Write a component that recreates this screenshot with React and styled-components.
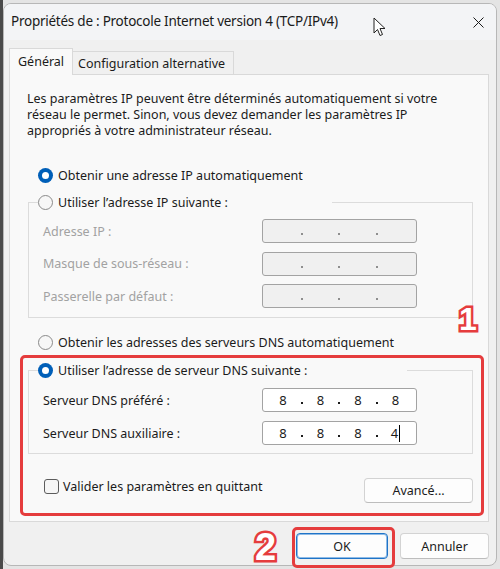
import React from "react";
import styled, { createGlobalStyle, css } from "styled-components";

const Global = createGlobalStyle`
  html, body { margin: 0; padding: 0; background: #d9d9d9; }
  body { font-family: "Noto Sans", "Open Sans", sans-serif; color: #1b1b1b; }
  * { box-sizing: border-box; }
`;

const Stage = styled.div`
  position: relative;
  width: 500px;
  height: 569px;
  overflow: hidden;
  padding: 3px 0 0 3px;
  background: linear-gradient(90deg, #4a4a4a 0 3px, #e4e4e4 3px);
`;

const Window = styled.div`
  width: 494px;
  height: 563px;
  background: #f0f0f0;
  border: 1px solid #b7b7b7;
  border-radius: 8px;
  overflow: hidden;
  display: flex;
  flex-direction: column;
`;

const TitleBar = styled.div`
  height: 36px;
  flex: none;
  display: flex;
  align-items: center;
  padding: 0 0 2px 7px;
  background: #f3f4f6;
`;

const Title = styled.div`
  font-size: 13.5px;
  letter-spacing: -0.25px;
  color: #1a1a1a;
  white-space: nowrap;
`;

const CloseButton = styled.div`
  margin-left: auto;
  width: 35px;
  height: 36px;
  display: grid;
  place-items: center;
  padding-top: 2px;
`;

const Body = styled.div`
  padding: 8px 0 0 5px;
`;

const TabsRow = styled.div`
  display: flex;
  align-items: flex-end;
  height: 27px;
  margin-bottom: -1px;
`;

const Tab = styled.div`
  font-size: 12.5px;
  white-space: nowrap;
  border: 1px solid #d9d9d9;
  display: flex;
  align-items: center;
  ${(p) =>
    p.$active
      ? css`
          position: relative;
          z-index: 1;
          height: 27px;
          width: 64px;
          padding: 0 0 1px 8px;
          background: #f9f9f9;
          border-bottom: none;
        `
      : css`
          height: 24px;
          width: 161px;
          padding: 0 0 0 5px;
          background: #f0f0f0;
          border-left: none;
        `}
`;

const Panel = styled.div`
  width: 480px;
  height: 448px;
  border: 1px solid #d9d9d9;
  background: #f9f9f9;
  display: flex;
  flex-direction: column;
`;

const Intro = styled.p`
  margin: 16px 0 0 17px;
  font-size: 12.5px;
  line-height: 16px;
  white-space: nowrap;
`;

const RadioRow = styled.label`
  display: flex;
  align-items: center;
  gap: 5px;
  height: 20px;
  font-size: 12.5px;
  white-space: nowrap;
  margin: ${(p) => p.$top || 0}px 0 0 28px;
`;

const RadioDot = styled.span`
  flex: none;
  width: 15px;
  height: 15px;
  border-radius: 50%;
  display: grid;
  place-items: center;
  ${(p) =>
    p.$checked
      ? css`
          background: #005fb8;
          &::after {
            content: "";
            width: 7px;
            height: 7px;
            border-radius: 50%;
            background: #ffffff;
          }
        `
      : css`
          border: 1px solid #8a8a8a;
          background: #f7f7f7;
        `}
`;

const GroupBox = styled.fieldset`
  margin: ${(p) => p.$top}px 0 0 18px;
  width: 445px;
  min-width: 0;
  border: 1px solid #dcdcdc;
  padding: 0;
`;

const GroupLegend = styled.legend`
  margin-left: 9px;
  padding: 0;
  width: ${(p) => p.$w}px;
`;

const LegendRadio = styled(RadioRow)`
  margin: 0;
`;

const Rows = styled.div`
  display: flex;
  flex-direction: column;
  gap: ${(p) => p.$gap}px;
  padding: ${(p) => p.$pt}px 0 ${(p) => p.$pb}px 14px;
`;

const FieldRow = styled.div`
  display: flex;
  align-items: center;
  height: 24px;
`;

const FieldLabel = styled.span`
  width: 219px;
  font-size: 12.5px;
  white-space: nowrap;
  color: ${(p) => (p.$disabled ? "#a2a2a2" : "#1b1b1b")};
`;

const IpBox = styled.div`
  width: 155px;
  height: 24px;
  border: 1px solid #a3a3a3;
  border-radius: 3px;
  background: ${(p) => (p.$disabled ? "#f0f0f0" : "#ffffff")};
  display: flex;
  align-items: center;
  padding-left: 5px;
  font-size: 13px;
  color: #1b1b1b;
`;

const Octet = styled.span`
  width: 30px;
  text-align: center;
  white-space: nowrap;
`;

const Dot = styled.span`
  width: 7.5px;
  display: grid;
  place-items: center;
  &::after {
    content: "";
    width: 2px;
    height: 2px;
    margin-top: 6px;
    background: ${(p) => (p.$disabled ? "#8e8e8e" : "#1b1b1b")};
  }
`;

const Caret = styled.span`
  display: inline-block;
  width: 1px;
  height: 17px;
  margin-left: 1px;
  vertical-align: -4px;
  background: #000;
`;

const BottomRow = styled.div`
  margin-top: 24px;
  display: flex;
  align-items: flex-start;
  justify-content: space-between;
  padding: 0 15px 0 34px;
`;

const CheckLabel = styled.label`
  display: flex;
  align-items: center;
  gap: 4px;
  height: 16px;
  font-size: 12.5px;
  white-space: nowrap;
`;

const CheckBox = styled.span`
  width: 15px;
  height: 15px;
  border: 1px solid #5c5c5c;
  border-radius: 3px;
  background: #f6f6f6;
`;

const Button = styled.button`
  font-family: inherit;
  font-size: 12.5px;
  color: #1b1b1b;
  width: ${(p) => p.$w}px;
  height: ${(p) => p.$h || 26}px;
  padding: 0;
  border-radius: 4px;
  background: #fdfdfd;
  border: 1px solid #d3d3d3;
  border-bottom-color: #bdbdbd;
  ${(p) =>
    p.$default &&
    css`
      border: 1px solid #1f74c8;
      box-shadow: inset 0 0 0 1px #8fbbe6;
    `}
`;

const Footer = styled.div`
  display: flex;
  justify-content: flex-end;
  gap: 12px;
  padding: 11px 7px 0 0;
`;

const RedBox = styled.div`
  position: absolute;
  border: 3px solid #e53c3d;
  border-radius: 5px;
  pointer-events: none;
`;

const Marker = styled.span`
  position: absolute;
  padding: 0 3px;
  font-family: "Liberation Sans", Arial, sans-serif;
  font-weight: 700;
  line-height: 1;
  color: #ffffff;
  -webkit-text-stroke: 5px #e53c3d;
  paint-order: stroke fill;
`;

const Pointer = styled.svg`
  position: absolute;
  left: 373px;
  top: 17px;
`;

function Radio({ checked, children, top }) {
  return (
    <RadioRow $top={top}>
      <RadioDot $checked={checked} />
      {children}
    </RadioRow>
  );
}

function IpField({ values, disabled, caret }) {
  const v = values || ["", "", "", ""];
  return (
    <IpBox $disabled={disabled}>
      {v.map((o, i) => (
        <React.Fragment key={i}>
          {i > 0 && <Dot $disabled={disabled} />}
          <Octet>
            {o}
            {caret && i === 3 && <Caret />}
          </Octet>
        </React.Fragment>
      ))}
    </IpBox>
  );
}

export default function App() {
  return (
    <>
      <Global />
      <Stage>
        <Window>
          <TitleBar>
            <Title>Propriétés de : Protocole Internet version 4 (TCP/IPv4)</Title>
            <CloseButton>
              <svg width="11" height="11" viewBox="0 0 11 11">
                <path d="M0.5 0.5 L10.5 10.5 M10.5 0.5 L0.5 10.5" stroke="#1a1a1a" strokeWidth="1" fill="none" />
              </svg>
            </CloseButton>
          </TitleBar>
          <Body>
            <TabsRow>
              <Tab $active>Général</Tab>
              <Tab>Configuration alternative</Tab>
            </TabsRow>
            <Panel>
              <Intro>
                Les paramètres IP peuvent être déterminés automatiquement si votre
                <br />
                réseau le permet. Sinon, vous devez demander les paramètres IP
                <br />
                appropriés à votre administrateur réseau.
              </Intro>
              <Radio checked top={26}>Obtenir une adresse IP automatiquement</Radio>
              <GroupBox $top={7}>
                <GroupLegend $w={294}>
                  <LegendRadio>
                    <RadioDot />
                    Utiliser l’adresse IP suivante :
                  </LegendRadio>
                </GroupLegend>
                <Rows $gap={8.5} $pt={7} $pb={9}>
                  <FieldRow>
                    <FieldLabel $disabled>Adresse IP :</FieldLabel>
                    <IpField disabled />
                  </FieldRow>
                  <FieldRow>
                    <FieldLabel $disabled>Masque de sous-réseau :</FieldLabel>
                    <IpField disabled />
                  </FieldRow>
                  <FieldRow>
                    <FieldLabel $disabled>Passerelle par défaut :</FieldLabel>
                    <IpField disabled />
                  </FieldRow>
                </Rows>
              </GroupBox>
              <Radio top={14}>Obtenir les adresses des serveurs DNS automatiquement</Radio>
              <GroupBox $top={8}>
                <GroupLegend $w={369}>
                  <LegendRadio>
                    <RadioDot $checked />
                    Utiliser l’adresse de serveur DNS suivante :
                  </LegendRadio>
                </GroupLegend>
                <Rows $gap={9} $pt={8} $pb={8}>
                  <FieldRow>
                    <FieldLabel>Serveur DNS préféré :</FieldLabel>
                    <IpField values={["8", "8", "8", "8"]} />
                  </FieldRow>
                  <FieldRow>
                    <FieldLabel>Serveur DNS auxiliaire :</FieldLabel>
                    <IpField values={["8", "8", "8", "4"]} caret />
                  </FieldRow>
                </Rows>
              </GroupBox>
              <BottomRow>
                <CheckLabel>
                  <CheckBox />
                  Valider les paramètres en quittant
                </CheckLabel>
                <Button $w={109} $h={25}>Avancé...</Button>
              </BottomRow>
            </Panel>
          </Body>
          <Footer>
            <Button $w={92} $default>OK</Button>
            <Button $w={89}>Annuler</Button>
          </Footer>
        </Window>

        <RedBox style={{ left: 20, top: 355, width: 464, height: 161 }} />
        <RedBox style={{ left: 292, top: 527, width: 103, height: 41 }} />
        <Marker style={{ left: 456, top: 303, fontSize: 32 }}>1</Marker>
        <Marker style={{ left: 252, top: 528, fontSize: 38 }}>2</Marker>
        <Pointer width="14" height="20" viewBox="0 0 14 20">
          <path d="M1 1 L1 16 L4.5 12.5 L7 18.5 L9.5 17.5 L7 11.5 L12 11.5 Z" fill="#fff" stroke="#222" strokeWidth="1" strokeLinejoin="round" />
        </Pointer>
      </Stage>
    </>
  );
}
